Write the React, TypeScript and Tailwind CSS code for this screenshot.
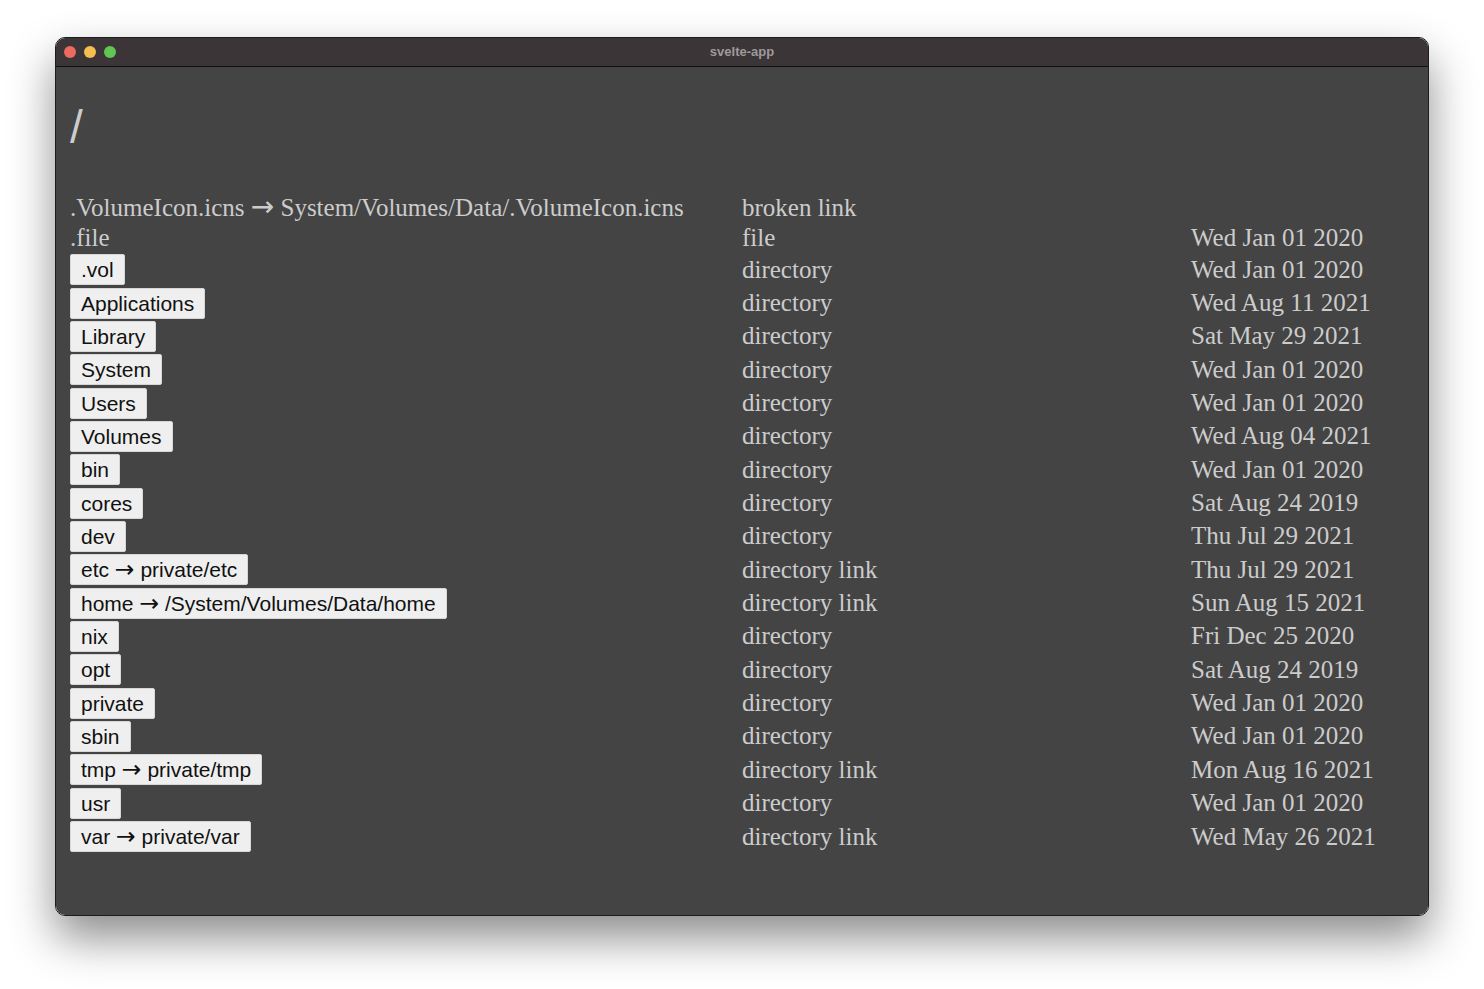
import React from 'react';

interface Entry {
  name: string;
  kind: string;
  date?: string;
  button?: boolean;
}

const entries: Entry[] = [
  { name: '.VolumeIcon.icns → System/Volumes/Data/.VolumeIcon.icns', kind: 'broken link' },
  { name: '.file', kind: 'file', date: 'Wed Jan 01 2020' },
  { name: '.vol', kind: 'directory', date: 'Wed Jan 01 2020', button: true },
  { name: 'Applications', kind: 'directory', date: 'Wed Aug 11 2021', button: true },
  { name: 'Library', kind: 'directory', date: 'Sat May 29 2021', button: true },
  { name: 'System', kind: 'directory', date: 'Wed Jan 01 2020', button: true },
  { name: 'Users', kind: 'directory', date: 'Wed Jan 01 2020', button: true },
  { name: 'Volumes', kind: 'directory', date: 'Wed Aug 04 2021', button: true },
  { name: 'bin', kind: 'directory', date: 'Wed Jan 01 2020', button: true },
  { name: 'cores', kind: 'directory', date: 'Sat Aug 24 2019', button: true },
  { name: 'dev', kind: 'directory', date: 'Thu Jul 29 2021', button: true },
  { name: 'etc → private/etc', kind: 'directory link', date: 'Thu Jul 29 2021', button: true },
  { name: 'home → /System/Volumes/Data/home', kind: 'directory link', date: 'Sun Aug 15 2021', button: true },
  { name: 'nix', kind: 'directory', date: 'Fri Dec 25 2020', button: true },
  { name: 'opt', kind: 'directory', date: 'Sat Aug 24 2019', button: true },
  { name: 'private', kind: 'directory', date: 'Wed Jan 01 2020', button: true },
  { name: 'sbin', kind: 'directory', date: 'Wed Jan 01 2020', button: true },
  { name: 'tmp → private/tmp', kind: 'directory link', date: 'Mon Aug 16 2021', button: true },
  { name: 'usr', kind: 'directory', date: 'Wed Jan 01 2020', button: true },
  { name: 'var → private/var', kind: 'directory link', date: 'Wed May 26 2021', button: true },
];

function Name({ text }: { text: string }) {
  const parts = text.split(' → ');
  if (parts.length === 1) return <>{text}</>;
  return (
    <>
      {parts[0]}{' '}
      <span className="inline-block align-baseline text-[1.12em] leading-none [font-family:'DejaVu_Sans',sans-serif]">
        →
      </span>{' '}
      {parts[1]}
    </>
  );
}

export default function App() {
  return (
    <div className="min-h-screen w-full bg-white pl-[55px] pt-[37px]">
      <div className="flex h-[879px] w-[1374px] flex-col overflow-hidden rounded-[10px] border border-[#1c1c1c] shadow-[0_22px_45px_rgba(0,0,0,0.45)]">
        {/* Title bar */}
        <div className="relative flex h-[29px] shrink-0 items-center border-b border-[#111] bg-[#3b3537] px-[8px]">
          <div className="flex gap-[8px]">
            <span className="h-[12px] w-[12px] rounded-full bg-[#ec6a5e]" />
            <span className="h-[12px] w-[12px] rounded-full bg-[#f4bf4f]" />
            <span className="h-[12px] w-[12px] rounded-full bg-[#61c554]" />
          </div>
          <div className="absolute inset-0 flex items-center justify-center text-[13px] font-bold text-[#9d9a9b] [font-family:'Liberation_Sans',Arial,sans-serif]">
            svelte-app
          </div>
        </div>

        {/* Content */}
        <div className="flex-1 bg-[#444444] px-[14px] text-[#cccccc] [font-family:'Liberation_Serif','Times_New_Roman',serif]">
          <h1 className="mt-[34px] h-[92px] text-[46px] leading-[52px] [font-family:'Liberation_Sans',Arial,sans-serif]">
            /
          </h1>
          <div className="grid grid-cols-[672px_449px_1fr]">
            {entries.map((e, i) => (
              <React.Fragment key={e.name}>
                <div
                  className={`flex items-center ${
                    e.button ? 'h-[33.35px]' : i === 0 ? 'h-[30px]' : 'h-[29.5px]'
                  }`}
                >
                  {e.button ? (
                    <button className="h-[31px] rounded-[2px] border border-[#d6d6d6] bg-[#efefef] px-[10px] text-[21px] leading-[29px] text-[#111] whitespace-nowrap [font-family:'Liberation_Sans',Arial,sans-serif]">
                      <Name text={e.name} />
                    </button>
                  ) : (
                    <span className="whitespace-nowrap text-[25px] leading-[30px]">
                      <Name text={e.name} />
                    </span>
                  )}
                </div>
                <div className="flex items-center text-[25px] leading-[30px]">{e.kind}</div>
                <div className="flex items-center text-[25px] leading-[30px]">{e.date ?? ''}</div>
              </React.Fragment>
            ))}
          </div>
        </div>
      </div>
    </div>
  );
}
